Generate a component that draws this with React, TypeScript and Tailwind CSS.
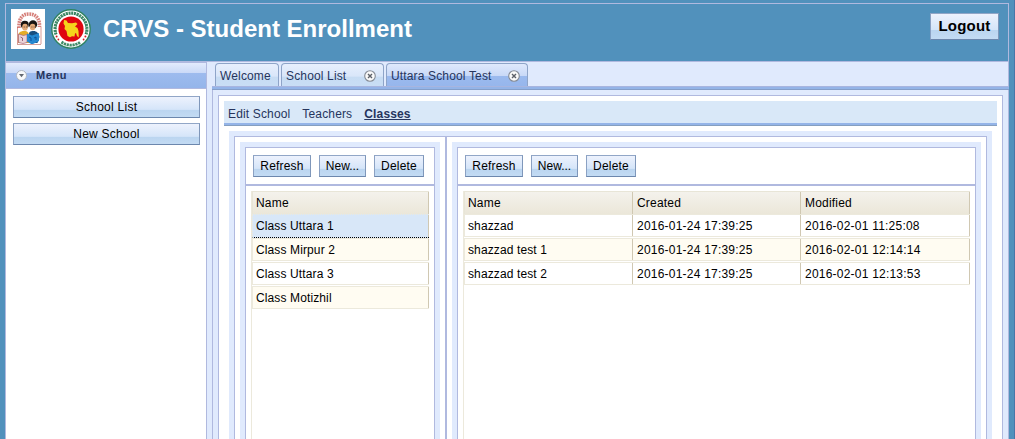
import React from 'react';

function FamilyLogo() {
  return (
    <svg width="34" height="40" viewBox="0 0 34 40" className="shrink-0">
      <rect width="34" height="40" fill="#fff" />
      <path d="M6.500 35V18M30 18v17" fill="none" stroke="#d99a94" strokeWidth="1" />
      <path d="M8 19C7.500 10 11 5 18 5s11 5 10.500 13" fill="none" stroke="#c8564e" strokeWidth="3.600" strokeDasharray="1.700 .8" opacity=".75" />
      <circle cx="13.800" cy="15.800" r="4" fill="#191512" />
      <circle cx="22" cy="15.500" r="4.200" fill="#191512" />
      <ellipse cx="14" cy="18.200" rx="2.800" ry="3.400" fill="#e3aa78" />
      <ellipse cx="21.600" cy="18" rx="2.800" ry="3.200" fill="#e3aa78" />
      <path d="M12.700 18h1m1.200 0h1m4.500 0h1m1.200 0h1" stroke="#3a2118" strokeWidth=".7" />
      <path d="M7 28c0-4 2-6 6-6s5 2 5 5v7H7z" fill="#e5ad28" />
      <path d="M18 24c1-2 3-2 5-2s5 2 5.500 6l-2 6h-8z" fill="#174f80" />
      <path d="M7.500 25l5 1.500 3.500-1v8l-4 1-4.500-1z" fill="#ead4d9" stroke="#a8657a" strokeWidth=".7" />
      <path d="M9.500 28l2 1v3" fill="none" stroke="#854b62" strokeWidth=".8" />
      <path d="M16 24.500l5 2 7-2.500v8l-7 3.500-5-3z" fill="#2387cf" />
      <path d="M18 28l2 1v3m3-3l2-1v3" fill="none" stroke="#0c4d91" strokeWidth=".9" />
      <path d="M6 35.500h24" stroke="#d3a09b" />
    </svg>
  );
}

function SealLogo() {
  return (
    <svg width="40" height="40" viewBox="0 0 40 40" className="shrink-0">
      <circle cx="20" cy="20" r="19.200" fill="#fff" stroke="#2f8260" strokeWidth="1.400" />
      <path d="M5 25.500A16 16 0 1 1 35 25.500" fill="none" stroke="#3f8a67" strokeWidth="3" strokeDasharray="2.100 .7" />
      <path d="M5.800 25A15 15 0 1 1 34.200 25" fill="none" stroke="#1d6b45" strokeWidth=".8" strokeDasharray="1.300 1.100" />
      <path d="M10.500 33A16 16 0 0 0 29.500 33" fill="none" stroke="#3f8a67" strokeWidth="2.800" strokeDasharray="2.200 .7" />
      <circle cx="20" cy="20" r="12.600" fill="#df0710" />
      <path d="M13 11l2.500.5L17 14l4 .2 4-.7 1.500 1.500-2.500 2.500 2.500 1.500 1 3 .3 6.500-1.800-1.500-1-3-1 .5-.5 3-2.500-.3-2 1-2.500-1.200-1-5-2-2 .5-3-1.500-2.500z" fill="#f5d51c" />
      <circle cx="5.600" cy="27.500" r="1" fill="#d61b20" />
      <circle cx="34.400" cy="27.500" r="1" fill="#d61b20" />
      <circle cx="7.400" cy="30.500" r=".9" fill="#d61b20" />
      <circle cx="32.600" cy="30.500" r=".9" fill="#d61b20" />
    </svg>
  );
}

const buttonSkin =
  'border border-t-[#91a6c7] border-l-[#8ba1c3] border-r-[#7f97ba] border-b-[#6c87ad] bg-[linear-gradient(#edf2fd_0%,#d5e5f9_62%,#bbd5f0_66%,#c3dbf3_100%)] text-black';

function Button({ label, className }: { label: string; className: string }) {
  return (
    <button className={`${buttonSkin} flex h-[22px] shrink-0 items-center justify-center text-[12px] leading-[14px] ${className}`}>
      {label}
    </button>
  );
}

function Toolbar() {
  return (
    <div className="flex h-[38px] shrink-0 gap-2 border-b-2 border-[#b0b9df] pt-[7px] pl-[7px]">
      <Button label="Refresh" className="w-[58px] tracking-[0.2px]" />
      <Button label="New..." className="w-[47px]" />
      <Button label="Delete" className="w-[50px] tracking-[0.2px]" />
    </div>
  );
}

function CloseIcon() {
  return (
    <svg width="12" height="12" viewBox="0 0 12 12">
      <circle cx="6" cy="6" r="5.300" fill="#fafafa" stroke="#858b95" strokeWidth="1.100" />
      <path d="M4 4l4 4M8 4L4 8" stroke="#5c6068" strokeWidth="1.400" />
    </svg>
  );
}

function Tab({ label, width, closable, active }: { label: string; width: string; closable?: boolean; active?: boolean }) {
  const fill = active
    ? 'bg-[linear-gradient(#dfe9fc_0%,#c9d9f7_50%,#9bbaee_53%,#96b6ec_100%)]'
    : 'bg-[linear-gradient(#e7effd_0%,#d9e6f9_53%,#c7dcf3_57%,#c9def5_100%)]';
  return (
    <div className={`flex h-[24px] ${width} items-center rounded-t-[4px] border border-b-0 border-[#8ea4c8] ${fill} pl-1 pt-[1px] text-[12px] tracking-[0.15px] text-[#26355d]`}>
      <span className="flex-1 whitespace-nowrap">{label}</span>
      {closable && <span className="mr-[7px]"><CloseIcon /></span>}
    </div>
  );
}

function DataTable({ columns, widths, rows, selected }: { columns: string[]; widths: string[]; rows: string[][]; selected?: number }) {
  return (
    <div className="ml-[5px] mr-[5px] mt-[5px] flex-1 border-l border-[#ece9dc] text-[12px] leading-[14px] text-black">
      <div className="flex h-[23px] border-t border-l border-[#e8e5d7] bg-[linear-gradient(#f4f2ec,#ebe7d9)]">
        {columns.map((c, i) => (
          <div key={c} className={`${widths[i]} flex items-center border-r border-[#d0c8b2] ${i === 0 ? 'pl-[3px]' : 'pl-1'} tracking-[0.2px]`}>{c}</div>
        ))}
      </div>
      {rows.map((row, r) => {
        const chosen = r === selected;
        const surface = chosen ? 'bg-[#d8e7f8]' : r % 2 ? 'bg-[#fffcf2]' : 'bg-white';
        const edge = chosen
          ? 'h-[24px] border-b border-dotted border-b-black'
          : 'mb-px h-[23px] border-b border-b-[#ece9dc]';
        return (
          <div key={r} className={`flex border-t border-l border-t-[#ece9dc] border-l-[#ece9dc] ${surface} ${edge}`}>
            {row.map((v, i) => (
              <div key={i} className={`${widths[i]} flex items-center border-r border-[#d0c8b2] ${i === 0 ? 'pl-[3px] tracking-[0.12px]' : 'pl-1 tracking-[0.22px]'} whitespace-nowrap`}>{v}</div>
            ))}
          </div>
        );
      })}
    </div>
  );
}

function Pane({ children, className }: { children: React.ReactNode; className: string }) {
  return (
    <div className={`flex flex-col border-x-[5px] border-t-[5px] border-[#e0eafd] ${className}`}>
      <div className="flex flex-1 flex-col border-x border-t border-[#b0b9df] bg-white">
        {children}
      </div>
    </div>
  );
}

export default function App() {
  return (
    <div className="flex h-[439px] w-[1015px] overflow-hidden border-r border-[#4876a8] bg-[#5191bc] pl-[5px] pt-[3px] font-['Liberation_Sans',Arial,sans-serif]">
      <div className="flex w-[1004px] flex-col border-x border-t border-[#b0b9df]">
        <header className="flex h-[57px] shrink-0 items-start pl-[5px] pr-[9px] pt-[5px]">
          <FamilyLogo />
          <span className="ml-[6px]"><SealLogo /></span>
          <h1 className="ml-[12px] mt-[6px] flex-1 text-[24px] leading-[28px] font-bold text-white">CRVS - Student Enrollment</h1>
          <button className={`${buttonSkin} mt-[4px] h-[27px] w-[69px] pb-[2px] text-[15px] leading-[17px] font-bold tracking-[0.2px]`}>Logout</button>
        </header>
        <div className="flex min-h-0 flex-1 border-t border-[#b0b9df] bg-[#e0eafd]">
          <aside className="flex w-[201px] shrink-0 flex-col border-r border-[#b0b9df] bg-white">
            <div className="flex h-[27px] shrink-0 items-center border-y border-[#b0b9df] bg-[linear-gradient(#e2ebfd_0%,#cad9f7_40%,#9dbbee_42%,#94b5ea_100%)] pl-[10px]">
              <svg width="11" height="11" viewBox="0 0 11 11">
                <circle cx="5.500" cy="5.500" r="5" fill="#f8f9fb" stroke="#aeb4be" />
                <path d="M3 4h5L5.500 7.200z" fill="#636870" />
              </svg>
              <span className="ml-[9px] text-[11px] font-bold tracking-[0.6px] text-[#26355d]">Menu</span>
            </div>
            <div className="flex flex-col gap-[5px] px-[7px] pt-[7px] pr-[6px]">
              <Button label="School List" className="w-[187px] tracking-[0.25px]" />
              <Button label="New School" className="w-[187px] tracking-[0.25px]" />
            </div>
          </aside>
          <main className="ml-[5px] flex flex-1 flex-col">
            <nav className="flex h-[24px] shrink-0 gap-[2px] pl-[3px] pt-[1px]">
              <Tab label="Welcome" width="w-[64px]" />
              <Tab label="School List" width="w-[103px]" closable />
              <Tab label="Uttara School Test" width="w-[142px]" closable active />
            </nav>
            <div className="h-[4px] shrink-0 border-t border-b border-t-[#a8b5df] border-b-[#859fc9] bg-[#94b4e8]" />
            <div className="flex flex-1 border-l border-[#b0b9df] pl-[5px] pr-[5px] pt-[5px]">
              <section className="mr-px flex flex-1 flex-col border-x border-t border-[#b0b9df] bg-white px-[5px] pt-[5px]">
                <div className="flex h-[25px] shrink-0 items-center gap-[12px] border-b border-[#859fc0] bg-[#d9e8f8] pl-1 pt-[2px] text-[12px] tracking-[0.15px] text-[#26355d] shadow-[inset_0_-2px_0_#94b4e8]">
                  <span>Edit School</span>
                  <span>Teachers</span>
                  <span className="font-bold underline">Classes</span>
                </div>
                <div className="mt-[5px] ml-[5px] mr-[5px] flex flex-1 border-x-[5px] border-t-[5px] border-[#e0eafd]">
                  <div className="flex flex-1 border-x border-t border-[#b0b9df] bg-white pt-[5px] pl-[5px] pr-[5px]">
                    <Pane className="w-[200px]">
                      <Toolbar />
                      <DataTable columns={['Name']} widths={['w-[176px]']} selected={0} rows={[['Class Uttara 1'], ['Class Mirpur 2'], ['Class Uttara 3'], ['Class Motizhil']]} />
                    </Pane>
                    <div className="mx-[5px] -mt-[5px] w-[2px] bg-[#b0b9df]" />
                    <Pane className="flex-1">
                      <Toolbar />
                      <DataTable
                        columns={['Name', 'Created', 'Modified']}
                        widths={['w-[168px]', 'w-[168px]', 'w-[169px]']}
                        rows={[
                          ['shazzad', '2016-01-24 17:39:25', '2016-02-01 11:25:08'],
                          ['shazzad test 1', '2016-01-24 17:39:25', '2016-02-01 12:14:14'],
                          ['shazzad test 2', '2016-01-24 17:39:25', '2016-02-01 12:13:53'],
                        ]}
                      />
                    </Pane>
                  </div>
                </div>
              </section>
            </div>
          </main>
        </div>
      </div>
    </div>
  );
}
